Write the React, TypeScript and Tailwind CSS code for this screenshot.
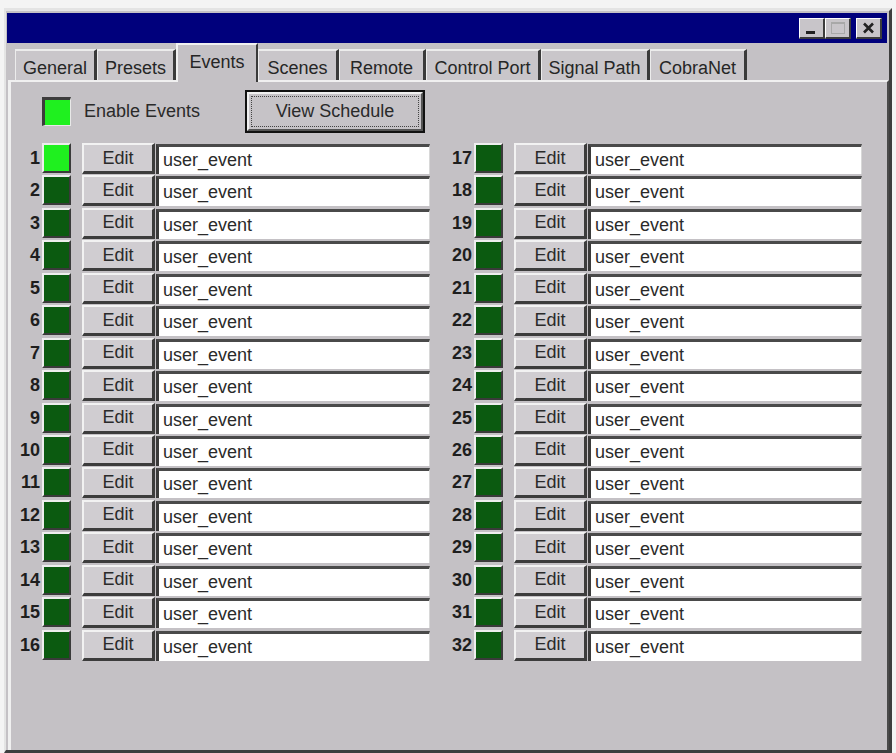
import React from "react";

const tabs = [
  { label: "General", w: 82 },
  { label: "Presets", w: 79 },
  { label: "Events", w: 82, active: true },
  { label: "Scenes", w: 81 },
  { label: "Remote", w: 87 },
  { label: "Control Port", w: 115 },
  { label: "Signal Path", w: 109 },
  { label: "CobraNet", w: 97 },
];

function EventRow({ n, on }: { n: number; on?: boolean }) {
  return (
    <div className="flex items-start h-[32.45px]">
      <div className="w-[30px] pr-[2px] text-right font-bold text-[18px] leading-[30px] text-[#1e1e1e]">{n}</div>
      <div className="w-[29px] h-[30px] border-t-2 border-l-2 border-t-[#eeeeee] border-l-[#eeeeee] border-r-2 border-b-2 border-r-[#3a3a3a] border-b-[#3a3a3a]">
        <div className={on ? "w-full h-full bg-[#1ff01f]" : "w-full h-full bg-[#0b5a10]"} />
      </div>
      <div className="ml-[11px] w-[73px] h-[31px] bg-[#d0cdd1] border-t-2 border-l-2 border-t-[#f2f2f2] border-l-[#f2f2f2] border-r-[3px] border-b-[3px] border-r-[#3c3c3c] border-b-[#3c3c3c] flex items-center justify-center text-[18px] text-[#2a2a2a]">
        Edit
      </div>
      <div className="ml-[1px] flex-1 h-[30px] mt-[1px] bg-white border-t-[3px] border-l-[3px] border-t-[#4a4a4a] border-l-[#3a3a3a] border-r border-r-[#d8d8d8] flex items-center pl-[4px] text-[18px] text-[#2a2a2a]">
        user_event
      </div>
    </div>
  );
}

export default function App() {
  const left = Array.from({ length: 16 }, (_, i) => i + 1);
  const right = Array.from({ length: 16 }, (_, i) => i + 17);
  return (
    <div className="w-[896px] h-[753px] bg-[#f4f4f4] overflow-hidden font-['Liberation_Sans',Arial,sans-serif]">
      <div className="ml-[4px] mt-[8px] w-[888px] h-[745px] bg-[#c4c1c5] border-t-[3px] border-l-2 border-t-[#e4e4e4] border-l-[#e4e4e4] border-r-[3px] border-b-[3px] border-r-[#3e3e3e] border-b-[#3e3e3e] flex flex-col">
        {/* caption bar */}
        <div className="ml-[1px] mr-[2px] mt-[2px] h-[30px] bg-[#00007c] flex items-center justify-end pr-[5px]">
          <div className="w-[26px] h-[21px] bg-[#c8c5c9] border-t border-l border-t-white border-l-white border-r-2 border-b-2 border-r-[#3c3c3c] border-b-[#3c3c3c] relative">
            <div className="absolute left-[6px] top-[12px] w-[9px] h-[3px] bg-[#222]" />
          </div>
          <div className="w-[26px] h-[21px] bg-[#c8c5c9] border-t border-l border-t-white border-l-white border-r-2 border-b-2 border-r-[#3c3c3c] border-b-[#3c3c3c] relative">
            <div className="absolute left-[5px] top-[3px] w-[14px] h-[12px] border border-[#a8a8a8] border-t-2" />
          </div>
          <div className="ml-[5px] w-[26px] h-[21px] bg-[#c8c5c9] border-t border-l border-t-white border-l-white border-r-2 border-b-2 border-r-[#3c3c3c] border-b-[#3c3c3c] flex items-center justify-center">
            <svg width="13" height="12" viewBox="0 0 13 12">
              <path d="M2 1.5 L11 10.5 M11 1.5 L2 10.5" stroke="#222" strokeWidth="2.6" />
            </svg>
          </div>
        </div>

        {/* tab strip */}
        <div className="h-[37px] flex items-end pl-[9px] relative z-10">
          {tabs.map((t) =>
            t.active ? (
              <div
                key={t.label}
                style={{ width: t.w }}
                className="h-[39px] -mb-[2px] bg-[#c4c1c5] border-t-2 border-l-2 border-t-[#f0f0f0] border-l-[#f0f0f0] border-r-2 border-r-[#3a3a3a] flex justify-center pt-[4px] text-[18px] text-[#262626]"
              >
                {t.label}
              </div>
            ) : (
              <div
                key={t.label}
                style={{ width: t.w }}
                className="h-[31px] bg-[#c9c6ca] border-t-2 border-l border-t-[#ececec] border-l-[#ececec] border-r-[3px] border-r-[#3a3a3a] flex justify-center pt-[4px] text-[18px] text-[#262626]"
              >
                {t.label}
              </div>
            )
          )}
        </div>

        {/* page */}
        <div className="flex-1 ml-[2px] border-t-2 border-l-[3px] border-t-[#f0f0f0] border-l-[#f0f0f0] border-r-2 border-r-[#4a4a4a] flex flex-col pl-[1px]">
          <div className="mt-[6px] h-[47px] flex items-center">
            <div className="ml-[30px] w-[29px] h-[29px] border-t-[3px] border-l-[3px] border-t-[#3c3c3c] border-l-[#3c3c3c] border-r border-b border-r-[#e8e8e8] border-b-[#e8e8e8] bg-[#1ff01f]" />
            <div className="ml-[13px] w-[161px] text-[18px] text-[#2a2a2a]">Enable Events</div>
            <div className="w-[180px] h-[43px] border-2 border-[#111] bg-[#c6c3c7]">
              <div className="w-full h-full border-t-2 border-l-2 border-t-[#f0f0f0] border-l-[#f0f0f0] border-r-2 border-b-2 border-r-[#555] border-b-[#555] p-[2px]">
                <div className="w-full h-full border border-dotted border-[#444] flex items-center justify-center text-[18px] text-[#2a2a2a]">
                  View Schedule
                </div>
              </div>
            </div>
          </div>

          <div className="mt-[8px] grid grid-cols-[418px_418px] gap-x-[14px]">
            <div className="flex flex-col">
              {left.map((n) => (
                <EventRow key={n} n={n} on={n === 1} />
              ))}
            </div>
            <div className="flex flex-col">
              {right.map((n) => (
                <EventRow key={n} n={n} />
              ))}
            </div>
          </div>
        </div>
      </div>
    </div>
  );
}
